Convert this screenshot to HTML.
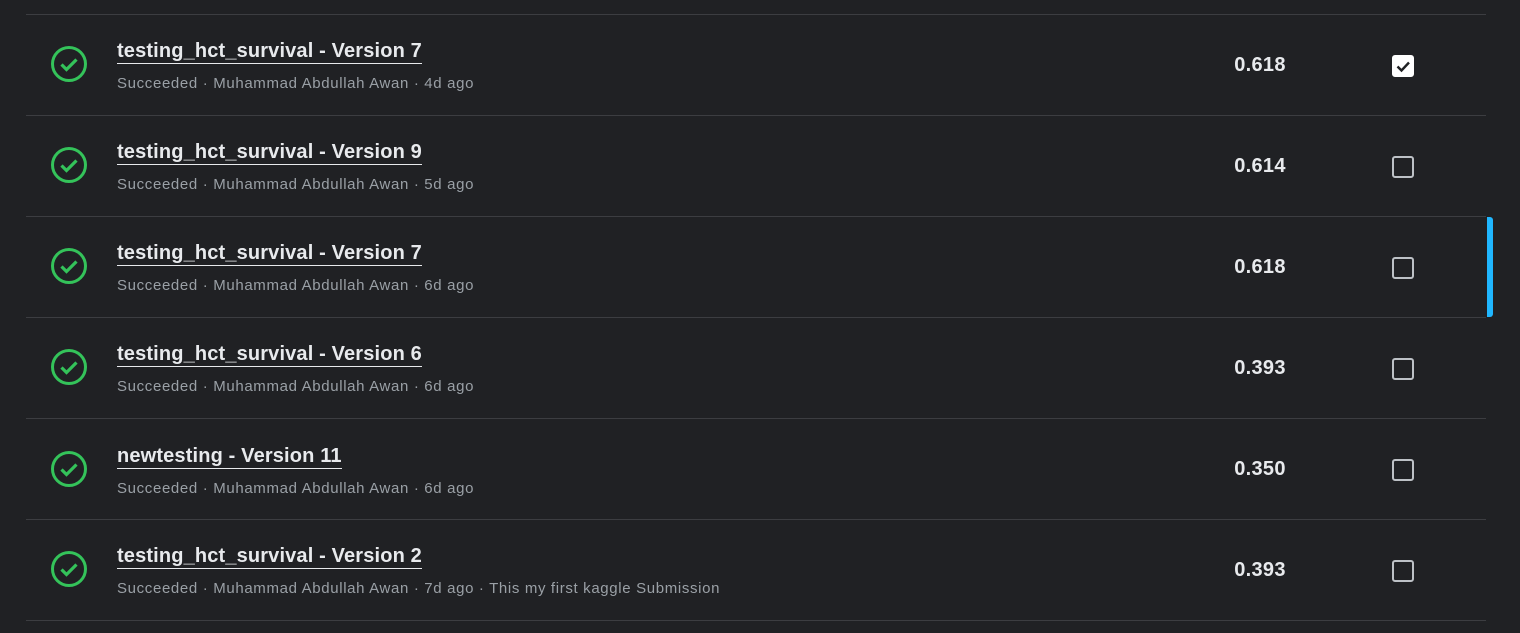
<!DOCTYPE html><html style="background:#202124;height:633px;overflow:hidden"><head><style>
body{margin:0;background:#202124;width:1520px;height:633px;overflow:hidden;font-family:"Liberation Sans",sans-serif;position:relative}
.row{position:absolute;left:26px;width:1460px;height:101px;border-top:1px solid #3c3d41}
.ic{position:absolute;left:24px;top:30px}
.t{position:absolute;left:91px;top:25px;color:#e8eaed;font-size:20px;font-weight:bold;border-bottom:1px solid #e8eaed;line-height:22px;padding-bottom:1px;letter-spacing:0.15px}
.s{position:absolute;left:91px;top:60px;color:#9aa0a6;font-size:15px;letter-spacing:0.65px}
.sc{position:absolute;left:1194px;width:80px;text-align:center;top:39px;color:#e8eaed;font-size:20px;font-weight:bold;letter-spacing:0.3px}
.cb{position:absolute;left:1366px;top:40px;width:18px;height:18px;border:2px solid #bdc1c6;border-radius:3px}
.cb.on{background:#fff;border-color:#fff}
</style></head><body>
<div style="position:absolute;left:1487px;top:217px;width:6px;height:100px;background:#20b7ff;border-radius:0 3px 3px 0"></div>
<div class="row" style="top:14px"><svg class="ic" width="38" height="38"><circle cx="19" cy="19" r="16.5" fill="none" stroke="#34c35a" stroke-width="3"/><path d="M11.5 19.5l5 5 10-10" fill="none" stroke="#34c35a" stroke-width="3.2"/></svg><div class="t">testing_hct_survival - Version 7</div><div class="s">Succeeded · Muhammad Abdullah Awan · 4d ago</div><div class="sc">0.618</div><div class="cb on"><svg width="18" height="18"><path d="M3.5 9.5l4 4 7.5-8" fill="none" stroke="#202124" stroke-width="2.4"/></svg></div></div>
<div class="row" style="top:115px"><svg class="ic" width="38" height="38"><circle cx="19" cy="19" r="16.5" fill="none" stroke="#34c35a" stroke-width="3"/><path d="M11.5 19.5l5 5 10-10" fill="none" stroke="#34c35a" stroke-width="3.2"/></svg><div class="t">testing_hct_survival - Version 9</div><div class="s">Succeeded · Muhammad Abdullah Awan · 5d ago</div><div class="sc">0.614</div><div class="cb"></div></div>
<div class="row" style="top:216px"><svg class="ic" width="38" height="38"><circle cx="19" cy="19" r="16.5" fill="none" stroke="#34c35a" stroke-width="3"/><path d="M11.5 19.5l5 5 10-10" fill="none" stroke="#34c35a" stroke-width="3.2"/></svg><div class="t">testing_hct_survival - Version 7</div><div class="s">Succeeded · Muhammad Abdullah Awan · 6d ago</div><div class="sc">0.618</div><div class="cb"></div></div>
<div class="row" style="top:317px"><svg class="ic" width="38" height="38"><circle cx="19" cy="19" r="16.5" fill="none" stroke="#34c35a" stroke-width="3"/><path d="M11.5 19.5l5 5 10-10" fill="none" stroke="#34c35a" stroke-width="3.2"/></svg><div class="t">testing_hct_survival - Version 6</div><div class="s">Succeeded · Muhammad Abdullah Awan · 6d ago</div><div class="sc">0.393</div><div class="cb"></div></div>
<div class="row" style="top:418px"><svg class="ic" width="38" height="38" style="top:31px"><circle cx="19" cy="19" r="16.5" fill="none" stroke="#34c35a" stroke-width="3"/><path d="M11.5 19.5l5 5 10-10" fill="none" stroke="#34c35a" stroke-width="3.2"/></svg><div class="t" style="top:26px">newtesting - Version 11</div><div class="s" style="top:61px">Succeeded · Muhammad Abdullah Awan · 6d ago</div><div class="sc">0.350</div><div class="cb"></div></div>
<div class="row" style="top:519px"><svg class="ic" width="38" height="38"><circle cx="19" cy="19" r="16.5" fill="none" stroke="#34c35a" stroke-width="3"/><path d="M11.5 19.5l5 5 10-10" fill="none" stroke="#34c35a" stroke-width="3.2"/></svg><div class="t">testing_hct_survival - Version 2</div><div class="s">Succeeded · Muhammad Abdullah Awan · 7d ago · This my first kaggle Submission</div><div class="sc">0.393</div><div class="cb"></div></div>
<div class="row" style="top:620px;height:0"></div>
</body></html>
